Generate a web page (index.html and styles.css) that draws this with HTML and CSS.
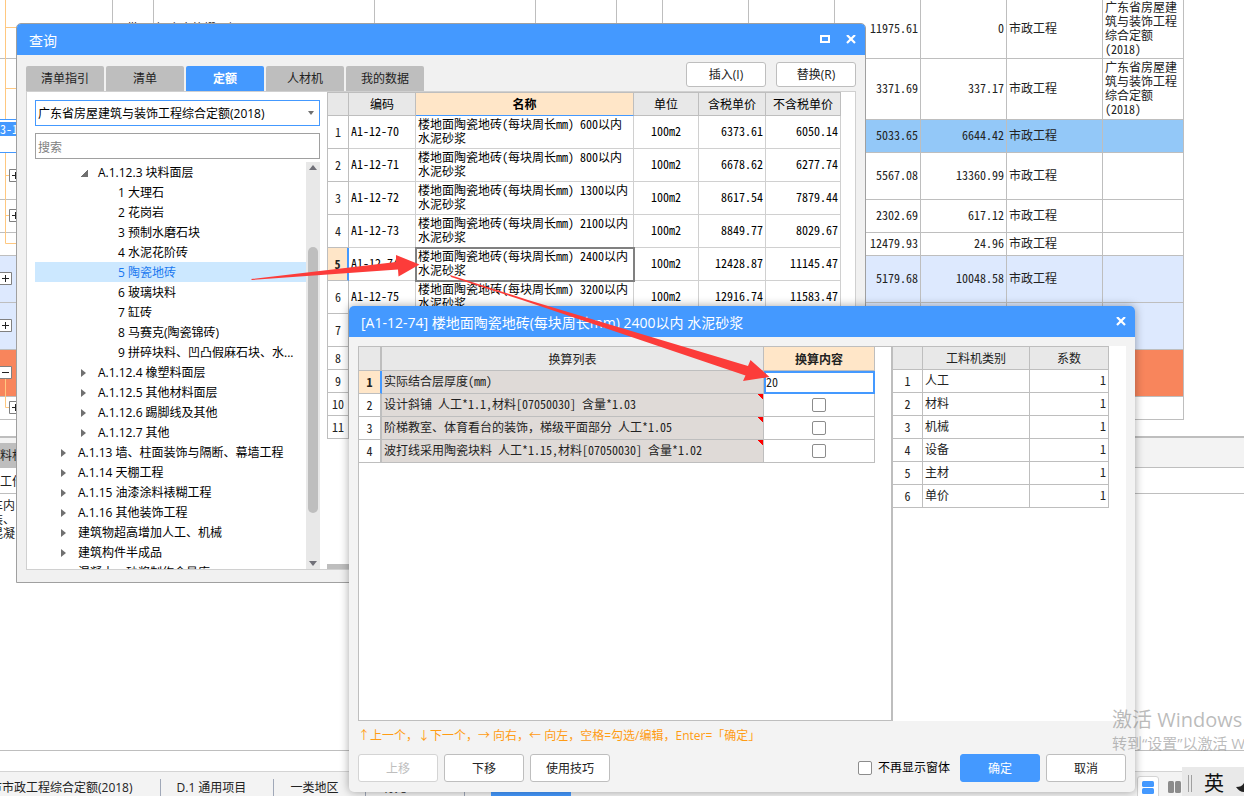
FILE: index.html
```html
<!DOCTYPE html>
<html lang="zh-CN">
<head>
<meta charset="utf-8">
<title>查询</title>
<link rel="stylesheet" href="styles.css">
</head>
<body>
<main class="workspace">
  <div class="sheet">
    <table class="grid estimate">
      <colgroup><col class="w113"><col class="w41"><col class="w221"><col class="w161"><col class="w81"><col class="w46"><col class="w86"><col class="w86"><col class="w86"><col class="w86"><col class="w96"><col class="w81"></colgroup>
      <tbody>
        <tr class="h59"><td></td><td class="mid">批</td><td>铝合金格栅天棚</td><td></td><td></td><td></td><td></td><td></td><td class="num">11975.61</td><td class="num">0</td><td>市政工程</td><td>广东省房屋建筑与装饰工程综合定额(2018)</td></tr>
        <tr class="h61"><td></td><td></td><td></td><td></td><td></td><td></td><td></td><td></td><td class="num">3371.69</td><td class="num">337.17</td><td>市政工程</td><td>广东省房屋建筑与装饰工程综合定额(2018)</td></tr>
        <tr class="h33 current"><td class="editing"></td><td></td><td></td><td></td><td></td><td></td><td></td><td></td><td class="num">5033.65</td><td class="num">6644.42</td><td>市政工程</td><td></td></tr>
        <tr class="h47"><td></td><td></td><td></td><td></td><td></td><td></td><td></td><td></td><td class="num">5567.08</td><td class="num">13360.99</td><td>市政工程</td><td></td></tr>
        <tr class="h33"><td></td><td></td><td></td><td></td><td></td><td></td><td></td><td></td><td class="num">2302.69</td><td class="num">617.12</td><td>市政工程</td><td></td></tr>
        <tr class="h23"><td></td><td></td><td></td><td></td><td></td><td></td><td></td><td></td><td class="num">12479.93</td><td class="num">24.96</td><td>市政工程</td><td></td></tr>
        <tr class="h47 item"><td></td><td></td><td></td><td></td><td></td><td></td><td></td><td></td><td class="num">5179.68</td><td class="num">10048.58</td><td>市政工程</td><td></td></tr>
        <tr class="h47 item"><td></td><td></td><td></td><td></td><td></td><td></td><td></td><td></td><td></td><td></td><td></td><td></td></tr>
        <tr class="h47 section"><td></td><td></td><td></td><td></td><td></td><td></td><td></td><td></td><td></td><td></td><td></td><td></td></tr>
        <tr class="h23"><td></td><td></td><td></td><td></td><td></td><td></td><td></td><td></td><td></td><td></td><td></td><td></td></tr>
      </tbody>
    </table>
    <svg class="outline-lines" width="24" height="420" viewBox="0 0 24 420" aria-hidden="true">
      <g fill="none" stroke="#ffc880">
        <path d="M5.5 0V119M5.5 27.500H24M5.500 88.500H24M5.500 153V243.500H24M5.500 175.500H24M5.500 215.500H24M5.500 379V407.500H24"/>
      </g>
      <g fill="#fff" stroke="#808080">
        <path d="M9.500 169.500h12v12h-12zM9.500 209.500h12v12h-12zM-.5 272.500h12v12h-12zM-.5 319.500h12v12h-12zM-.5 366.500h12v12h-12zM9.500 401.500h12v12h-12z"/>
      </g>
      <path fill="none" stroke="#222" d="M12 175.500h7M15.500 172v7M12 215.500h7M15.500 212v7M2 278.500h7M5.500 275v7M2 325.500h7M5.500 322v7M2 372.500h7M12 407.500h7M15.500 404v7"/>
    </svg>
    <span class="edit-text">3-1</span>
  </div>
  <section class="detail">
    <div class="detail-tabs"><span class="detail-tab">料机</span></div>
    <div class="detail-head">工作</div>
    <div class="detail-body">车内<br>装、<br>混凝</div>
  </section>
  <div class="strip"></div>
  <footer class="status">
    <span class="status-item first">市市政工程综合定额(2018)</span>
    <span class="status-item second">D.1 通用项目</span>
    <span class="status-item third">一类地区</span>
    <span class="status-item fourth">有元</span>
    <span class="status-active"></span>
    <span class="status-tools">
      <button class="view-button on" aria-label="上下布局"><svg width="12" height="13" viewBox="0 0 12 13"><rect width="12" height="6" rx="1.500" fill="#4499ff"/><rect y="7" width="12" height="6" rx="1.500" fill="#4499ff"/></svg></button>
      <button class="view-button" aria-label="左右布局"><svg width="13" height="12" viewBox="0 0 13 12"><rect width="6" height="12" rx="1.500" fill="#8c8c8c"/><rect x="7" width="6" height="12" rx="1.500" fill="#8c8c8c"/></svg></button>
    </span>
  </footer>
</main>

<section class="window query" aria-label="查询">
  <header class="titlebar">
    <h1 class="title">查询</h1>
    <button class="win-button" aria-label="最大化"><svg width="12" height="10" viewBox="0 0 12 10"><rect x="2" y="1" width="8" height="6" fill="none" stroke="#fff" stroke-width="2"/></svg></button>
    <button class="win-button" aria-label="关闭"><svg width="12" height="10" viewBox="0 0 12 10"><path d="M2 0L10 8M10 0L2 8" stroke="#fff" stroke-width="2.200"/></svg></button>
  </header>
  <div class="toolbar">
    <nav class="tabs">
      <button class="tab">清单指引</button><button class="tab">清单</button><button class="tab active">定额</button><button class="tab">人材机</button><button class="tab">我的数据</button>
    </nav>
    <button class="button small">插入(I)</button>
    <button class="button small">替换(R)</button>
  </div>
  <div class="query-panel">
    <div class="library">
      <div class="select-wrap">
        <select class="field library-select" aria-label="定额库"><option>广东省房屋建筑与装饰工程综合定额(2018)</option></select>
        <svg class="select-arrow" width="6" height="4" viewBox="0 0 6 4"><path d="M0 0H6L3 4z" fill="#707070"/></svg>
      </div>
      <input class="field search" type="text" placeholder="搜索" aria-label="搜索">
      <div class="tree-view">
        <ul class="tree">
          <li class="node level2 open">A.1.12.3 块料面层</li>
          <li class="node level3">1 大理石</li>
          <li class="node level3">2 花岗岩</li>
          <li class="node level3">3 预制水磨石块</li>
          <li class="node level3">4 水泥花阶砖</li>
          <li class="node level3 selected">5 陶瓷地砖</li>
          <li class="node level3">6 玻璃块料</li>
          <li class="node level3">7 缸砖</li>
          <li class="node level3">8 马赛克(陶瓷锦砖)</li>
          <li class="node level3">9 拼碎块料、凹凸假麻石块、水...</li>
          <li class="node level2 closed">A.1.12.4 橡塑料面层</li>
          <li class="node level2 closed">A.1.12.5 其他材料面层</li>
          <li class="node level2 closed">A.1.12.6 踢脚线及其他</li>
          <li class="node level2 closed">A.1.12.7 其他</li>
          <li class="node level1 closed">A.1.13 墙、柱面装饰与隔断、幕墙工程</li>
          <li class="node level1 closed">A.1.14 天棚工程</li>
          <li class="node level1 closed">A.1.15 油漆涂料裱糊工程</li>
          <li class="node level1 closed">A.1.16 其他装饰工程</li>
          <li class="node level1 closed">建筑物超高增加人工、机械</li>
          <li class="node level1 closed">建筑构件半成品</li>
          <li class="node level1">混凝土、砂浆制作含量库</li>
        </ul>
        <div class="scrollbar" aria-hidden="true">
          <svg width="8" height="5" viewBox="0 0 8 5"><path d="M0 5L4 0L8 5z" fill="#707078"/></svg>
          <span class="thumb"></span>
          <svg width="8" height="5" viewBox="0 0 8 5"><path d="M0 0H8L4 5z" fill="#707078"/></svg>
        </div>
      </div>
    </div>
    <div class="quota-pane">
      <table class="grid quotas">
        <colgroup><col class="w21"><col class="w67"><col class="w218"><col class="w65"><col class="w67"><col class="w75"></colgroup>
        <thead><tr><th></th><th>编码</th><th class="sorted">名称</th><th>单位</th><th>含税单价</th><th>不含税单价</th></tr></thead>
        <tbody>
          <tr class="h33"><th>1</th><td>A1-12-70</td><td>楼地面陶瓷地砖(每块周长mm) 600以内 水泥砂浆</td><td class="mid">100m2</td><td class="num">6373.61</td><td class="num">6050.14</td></tr>
          <tr class="h33"><th>2</th><td>A1-12-71</td><td>楼地面陶瓷地砖(每块周长mm) 800以内 水泥砂浆</td><td class="mid">100m2</td><td class="num">6678.62</td><td class="num">6277.74</td></tr>
          <tr class="h33"><th>3</th><td>A1-12-72</td><td>楼地面陶瓷地砖(每块周长mm) 1300以内 水泥砂浆</td><td class="mid">100m2</td><td class="num">8617.54</td><td class="num">7879.44</td></tr>
          <tr class="h33"><th>4</th><td>A1-12-73</td><td>楼地面陶瓷地砖(每块周长mm) 2100以内 水泥砂浆</td><td class="mid">100m2</td><td class="num">8849.77</td><td class="num">8029.67</td></tr>
          <tr class="h33"><th class="current-row">5</th><td>A1-12-74</td><td class="focused">楼地面陶瓷地砖(每块周长mm) 2400以内 水泥砂浆</td><td class="mid">100m2</td><td class="num">12428.87</td><td class="num">11145.47</td></tr>
          <tr class="h33"><th>6</th><td>A1-12-75</td><td>楼地面陶瓷地砖(每块周长mm) 3200以内 水泥砂浆</td><td class="mid">100m2</td><td class="num">12916.74</td><td class="num">11583.47</td></tr>
          <tr class="h33"><th>7</th><td></td><td></td><td></td><td></td><td></td></tr>
          <tr class="h23"><th>8</th><td></td><td></td><td></td><td></td><td></td></tr>
          <tr class="h23"><th>9</th><td></td><td></td><td></td><td></td><td></td></tr>
          <tr class="h23"><th>10</th><td></td><td></td><td></td><td></td><td></td></tr>
          <tr class="h23"><th>11</th><td></td><td></td><td></td><td></td><td></td></tr>
        </tbody>
      </table>
      <div class="h-scroll"></div>
    </div>
  </div>
</section>

<section class="window convert" aria-label="换算">
  <header class="titlebar">
    <h2 class="title">[A1-12-74] 楼地面陶瓷地砖(每块周长mm) 2400以内 水泥砂浆</h2>
    <button class="win-button" aria-label="关闭"><svg width="12" height="10" viewBox="0 0 12 10"><path d="M2 0L10 8M10 0L2 8" stroke="#fff" stroke-width="2.200"/></svg></button>
  </header>
  <div class="convert-panels">
    <div class="rules-pane">
      <table class="grid rules">
        <colgroup><col class="w23"><col class="w382"><col class="w111"></colgroup>
        <thead><tr><th></th><th>换算列表</th><th class="sorted">换算内容</th></tr></thead>
        <tbody>
          <tr class="h23"><th class="current-row">1</th><td class="rule">实际结合层厚度(mm)</td><td class="value-cell"><input class="value" type="text" value="20" aria-label="实际结合层厚度(mm)"></td></tr>
          <tr class="h23"><th>2</th><td class="rule noted"><label for="r2">设计斜铺 人工*1.1,材料[07050030] 含量*1.03</label></td><td class="mid"><input id="r2" class="check" type="checkbox"></td></tr>
          <tr class="h23"><th>3</th><td class="rule noted"><label for="r3">阶梯教室、体育看台的装饰，梯级平面部分 人工*1.05</label></td><td class="mid"><input id="r3" class="check" type="checkbox"></td></tr>
          <tr class="h23"><th>4</th><td class="rule noted"><label for="r4">波打线采用陶瓷块料 人工*1.15,材料[07050030] 含量*1.02</label></td><td class="mid"><input id="r4" class="check" type="checkbox"></td></tr>
        </tbody>
      </table>
    </div>
    <div class="factors-pane">
      <table class="grid factors">
        <colgroup><col class="w30"><col class="w107"><col class="w79"></colgroup>
        <thead><tr><th></th><th>工料机类别</th><th>系数</th></tr></thead>
        <tbody>
          <tr class="h23"><th>1</th><td>人工</td><td class="num">1</td></tr>
          <tr class="h23"><th>2</th><td>材料</td><td class="num">1</td></tr>
          <tr class="h23"><th>3</th><td>机械</td><td class="num">1</td></tr>
          <tr class="h23"><th>4</th><td>设备</td><td class="num">1</td></tr>
          <tr class="h23"><th>5</th><td>主材</td><td class="num">1</td></tr>
          <tr class="h23"><th>6</th><td>单价</td><td class="num">1</td></tr>
        </tbody>
      </table>
    </div>
  </div>
  <p class="hint">↑上一个，↓下一个，→ 向右，← 向左，空格=勾选/编辑，Enter=「确定」</p>
  <div class="actions">
    <button class="button" disabled>上移</button>
    <button class="button">下移</button>
    <button class="button">使用技巧</button>
    <label class="dismiss"><input class="check" type="checkbox">不再显示窗体</label>
    <button class="button primary">确定</button>
    <button class="button">取消</button>
  </div>
</section>

<svg class="pointers" width="540" height="150" viewBox="240 240 540 150" aria-hidden="true">
  <path fill="#fc3c3a" d="M251 279L396 262V255L419.500 264.500L398.500 276.500L398 269.500L252 280z"/>
  <path fill="#fc3c3a" d="M450 275L528 300L748 366L750.500 360L769.500 377L743 381L745.500 375.500L522 300L451 277z"/>
</svg>

<aside class="activation">
  <strong class="activation-title">激活 Windows</strong>
  <span class="activation-text">转到“设置”以激活 Windows。</span>
</aside>
<div class="ime">
  <span class="ime-grip"></span>
  <span class="ime-lang">英</span>
  <svg width="8" height="20" viewBox="0 0 8 20" aria-hidden="true"><path d="M8 9C6 12 4 13 0 13C2 16 5 18 8 18z" fill="#222"/></svg>
</div>
</body>
</html>
```
FILE: styles.css
```css
* { box-sizing: border-box; }

html, body { height: 100%; }

body {
  margin: 0;
  position: relative;
  overflow: hidden;
  background: #fff;
  color: #222;
  font: 12px/16px "Open Sans", "Noto Sans CJK SC", sans-serif;
}

button, input, select { font: inherit; color: inherit; }
button { padding: 0; border: 0; background: none; }

/* Main workspace */
.workspace { display: flex; flex-direction: column; height: 100%; }
.sheet { position: relative; padding-bottom: 16px; overflow: hidden; }
.outline-lines { position: absolute; left: 0; top: 0; }
.edit-text {
  position: absolute; left: 0; top: 122px; width: 20px;
  background: #4499ff; color: #fff; line-height: 14px;
  font-family: "Noto Sans Mono CJK SC", "Noto Sans CJK SC", monospace;
}

/* Grids */
.grid {
  table-layout: fixed;
  border-collapse: separate;
  border-spacing: 0;
  font: 12px/14px "Noto Sans Mono CJK SC", "Noto Sans CJK SC", monospace;
  font-feature-settings: "liga" 0, "ccmp" 0, "calt" 0;
}
.grid td, .grid th {
  padding: 0 2px 2px;
  border-right: 1px solid #bebebe;
  border-bottom: 1px solid #bebebe;
  text-align: left;
  vertical-align: middle;
  font-weight: 400;
}
.grid th { padding: 0; text-align: center; }
.grid tbody th { padding-bottom: 1px; }
.grid thead th { height: 24px; background: #e8e8e8; line-height: 16px; }
.grid .num { text-align: right; }
.grid .mid { text-align: center; }
.grid thead .sorted { background: #ffe6c8; font-weight: 700; }
.grid tbody .current-row { background: #ffe6c8; border-right: 2px solid #4499ff; font-weight: 700; }

.h23 { height: 23px; }
.h33 { height: 33px; }
.h47 { height: 47px; }
.h59 { height: 59px; }
.h61 { height: 61px; }

.w21 { width: 21px; }
.w23 { width: 23px; }
.w30 { width: 30px; }
.w41 { width: 41px; }
.w46 { width: 46px; }
.w65 { width: 65px; }
.w67 { width: 67px; }
.w75 { width: 75px; }
.w79 { width: 79px; }
.w81 { width: 81px; }
.w86 { width: 86px; }
.w96 { width: 96px; }
.w107 { width: 107px; }
.w111 { width: 111px; }
.w113 { width: 113px; }
.w161 { width: 161px; }
.w218 { width: 218px; }
.w221 { width: 221px; }
.w382 { width: 382px; }

.estimate { width: 1184px; }
.estimate .current td { background: #93c8f8; }
.estimate .current .editing { background: #fff; border-bottom-color: #4499ff; box-shadow: 0 -1px #4499ff; }
.estimate .item td { background: #dde9fe; }
.estimate .section td { background: #f8855c; }

/* Detail area */
.detail {
  flex: 1;
  border-top: 2px solid #bebebe;
  font: 12px/14px "Noto Sans Mono CJK SC", "Noto Sans CJK SC", monospace;
}
.detail-tabs { height: 30px; padding-top: 5px; background: #f3f3f3; border-bottom: 1px solid #bebebe; }
.detail-tab { display: block; width: 70px; height: 24px; line-height: 24px; background: #bebebe; }
.detail-head { height: 26px; line-height: 26px; border-bottom: 1px solid #bebebe; }
.detail-body { padding-top: 4px; margin-left: -9px; }
.strip { height: 21px; border-top: 1px solid #bebebe; }

.status {
  display: flex;
  height: 25px;
  overflow: hidden;
  border-top: 1px solid #d4d4d4;
  background: #f3f3f3;
}
.status-item { margin-top: 7px; padding: 0 27px 0 16px; height: 18px; line-height: 18px; border-right: 1px solid #a0a8b8; white-space: nowrap; }
.status-item.first { margin-left: -26px; }
.status-item.fourth { padding-right: 58px; }
.status-active { width: 80px; margin-left: 26px; background: #4499ff; }
.status-tools { display: flex; gap: 4px; margin-left: auto; padding: 4px 59px 0 0; }
.view-button { width: 22px; height: 24px; padding-top: 2px; }
.view-button.on { background: #fff; border: 1px solid #d4d4d4; border-radius: 3px; }

/* Windows */
.window { position: absolute; color: #222; }
.titlebar {
  display: flex;
  align-items: center;
  gap: 14px;
  height: 31px;
  padding: 0 8px 0 12px;
  background: #4499ff;
  color: #fff;
}
.title { flex: 1; margin: 0; padding-top: 2px; font-size: 14px; line-height: 20px; font-weight: 400; }
.win-button { display: flex; width: 12px; height: 10px; }

.button {
  width: 80px;
  height: 28px;
  padding-top: 1px;
  border: 1px solid #bebebe;
  border-radius: 3px;
  background: #fff;
}
.button.small { height: 25px; }
.button:disabled { color: #bebebe; border-color: #d4d4d4; }
.button.primary { background: #4499ff; border-color: #4499ff; color: #fff; }

.check {
  appearance: none;
  width: 14px;
  height: 14px;
  margin: 0;
  border: 1px solid #8c8c8c;
  border-radius: 2px;
  background: #fff;
  vertical-align: middle;
}

/* Query window */
.query {
  left: 16px;
  top: 23px;
  width: 850px;
  border: 1px solid #a0a0a0;
  border-radius: 5px 5px 0 0;
  background: #f1f1f1;
  overflow: hidden;
}
.toolbar { display: flex; gap: 10px; height: 36px; padding: 7px 9px 0; }
.tabs { display: flex; gap: 2px; flex: 1; padding-top: 4px; }
.tab { width: 78px; height: 25px; border-radius: 2px 2px 0 0; background: #bebebe; }
.tab.active { background: #4499ff; color: #fff; font-weight: 700; }
.query-panel { display: flex; margin: 0 9px 12px; border: 1px solid #d0d0d0; background: #fff; }
.library { display: flex; flex-direction: column; width: 300px; padding: 8px 7px 0 8px; color: #000; }
.select-wrap { position: relative; margin-bottom: 7px; }
.field { display: block; width: 100%; height: 26px; padding: 2px 2px 0; border: 1px solid #a0a0a0; border-radius: 0; background: #fff; }
.library-select { appearance: none; border-color: #4499ff; }
.select-arrow { position: absolute; right: 6px; top: 11px; }
.search { margin-bottom: 3px; }
.search::placeholder { color: #808080; }
.tree-view { display: flex; height: 407px; }
.tree { flex: 1; margin: 0; padding: 0; list-style: none; overflow: hidden; }
.node { display: flex; align-items: center; height: 20px; padding-top: 2px; line-height: 18px; white-space: nowrap; }
.node::before { content: ""; width: 17px; }
.node.closed::before { width: 0; border: solid transparent; border-width: 4px 12px 4px 0; border-left: 5px solid #707070; }
.node.open::before { width: 7px; height: 7px; margin: 0 10px 0 0; background: linear-gradient(135deg, transparent 50%, #707070 50%); }
.level1 { padding-left: 26px; }
.level2 { padding-left: 46px; }
.level3 { padding-left: 66px; }
.node.selected { background: #cce8ff; color: #1a78f0; }
.scrollbar { display: flex; flex-direction: column; align-items: center; justify-content: space-between; width: 14px; padding: 3px 0; background: #e8e8e8; }
.thumb { width: 10px; height: 266px; margin-top: 28px; border-radius: 5px; background: #bebebe; }

.quota-pane { flex: 1; display: flex; flex-direction: column; justify-content: space-between; }
.quotas { width: 514px; color: #000; border-left: 1px solid #bebebe; }
.quotas td { border-color: #d0d0d0; }
.quotas thead th { border-top: 1px solid #bebebe; }
.quotas thead .sorted { border-bottom-color: #4499ff; }
.quotas tbody th { color: #222; }
.quotas .focused { outline: 2px solid #808080; outline-offset: -1px; }
.h-scroll { height: 5px; background: #bebebe; }

/* Conversion window */
.convert {
  left: 349px;
  top: 306px;
  width: 786px;
  border-radius: 5px;
  background: #f3f3f3;
  box-shadow: 0 0 10px rgba(0, 0, 0, .35);
}
.convert .titlebar { border-radius: 5px 5px 0 0; }
.convert-panels { display: flex; height: 375px; margin: 9px 9px 0; }
.rules-pane { width: 535px; border: 1px solid #bebebe; border-right-width: 2px; background: #fff; }
.rules { width: 516px; }
.rules .rule { background: #dfdad7; }
.rules .noted { background: linear-gradient(225deg, #f00 4px, transparent 4px) #dfdad7; }
.rules th:first-child { border-right-width: 2px; }
.rules .value-cell { padding: 0; outline: 2px solid #4499ff; outline-offset: -2px; }
.value { display: block; width: 100%; height: 20px; padding: 0 2px 2px; border: 0; background: transparent; outline: 0; }
.factors-pane { flex: 1; background: #fff; }
.factors { width: 216px; }
.factors thead th { border-top: 1px solid #bebebe; }
.hint { margin: 6px 9px 9px; line-height: 18px; color: #ff9c14; }
.actions { display: flex; align-items: center; gap: 6px; padding: 0 9px 10px; }
.dismiss { display: flex; align-items: center; gap: 6px; margin: 0 4px 0 auto; color: #000; }

/* Overlays */
.pointers { position: absolute; left: 240px; top: 240px; pointer-events: none; }
.activation {
  position: absolute; left: 1112px; right: 0; top: 707px;
  display: flex; flex-direction: column;
  overflow: hidden;
  color: rgba(120, 120, 120, .5); white-space: nowrap;
}
.activation-title { font-size: 20px; line-height: 26px; font-weight: 400; }
.activation-text { font-size: 15px; line-height: 20px; }
.ime {
  position: absolute; left: 1182px; right: 0; bottom: 0;
  display: flex; align-items: center; gap: 12px;
  height: 29px; padding: 4px 0 0 6px; overflow: hidden;
  background: #e9e9e9; color: #111;
}
.ime-grip { width: 4px; height: 17px; flex: none; border: solid #a0a0a0; border-width: 0 1px; }
.ime-lang { font-size: 20px; line-height: 28px; }
.ime svg { flex: none; }
```
